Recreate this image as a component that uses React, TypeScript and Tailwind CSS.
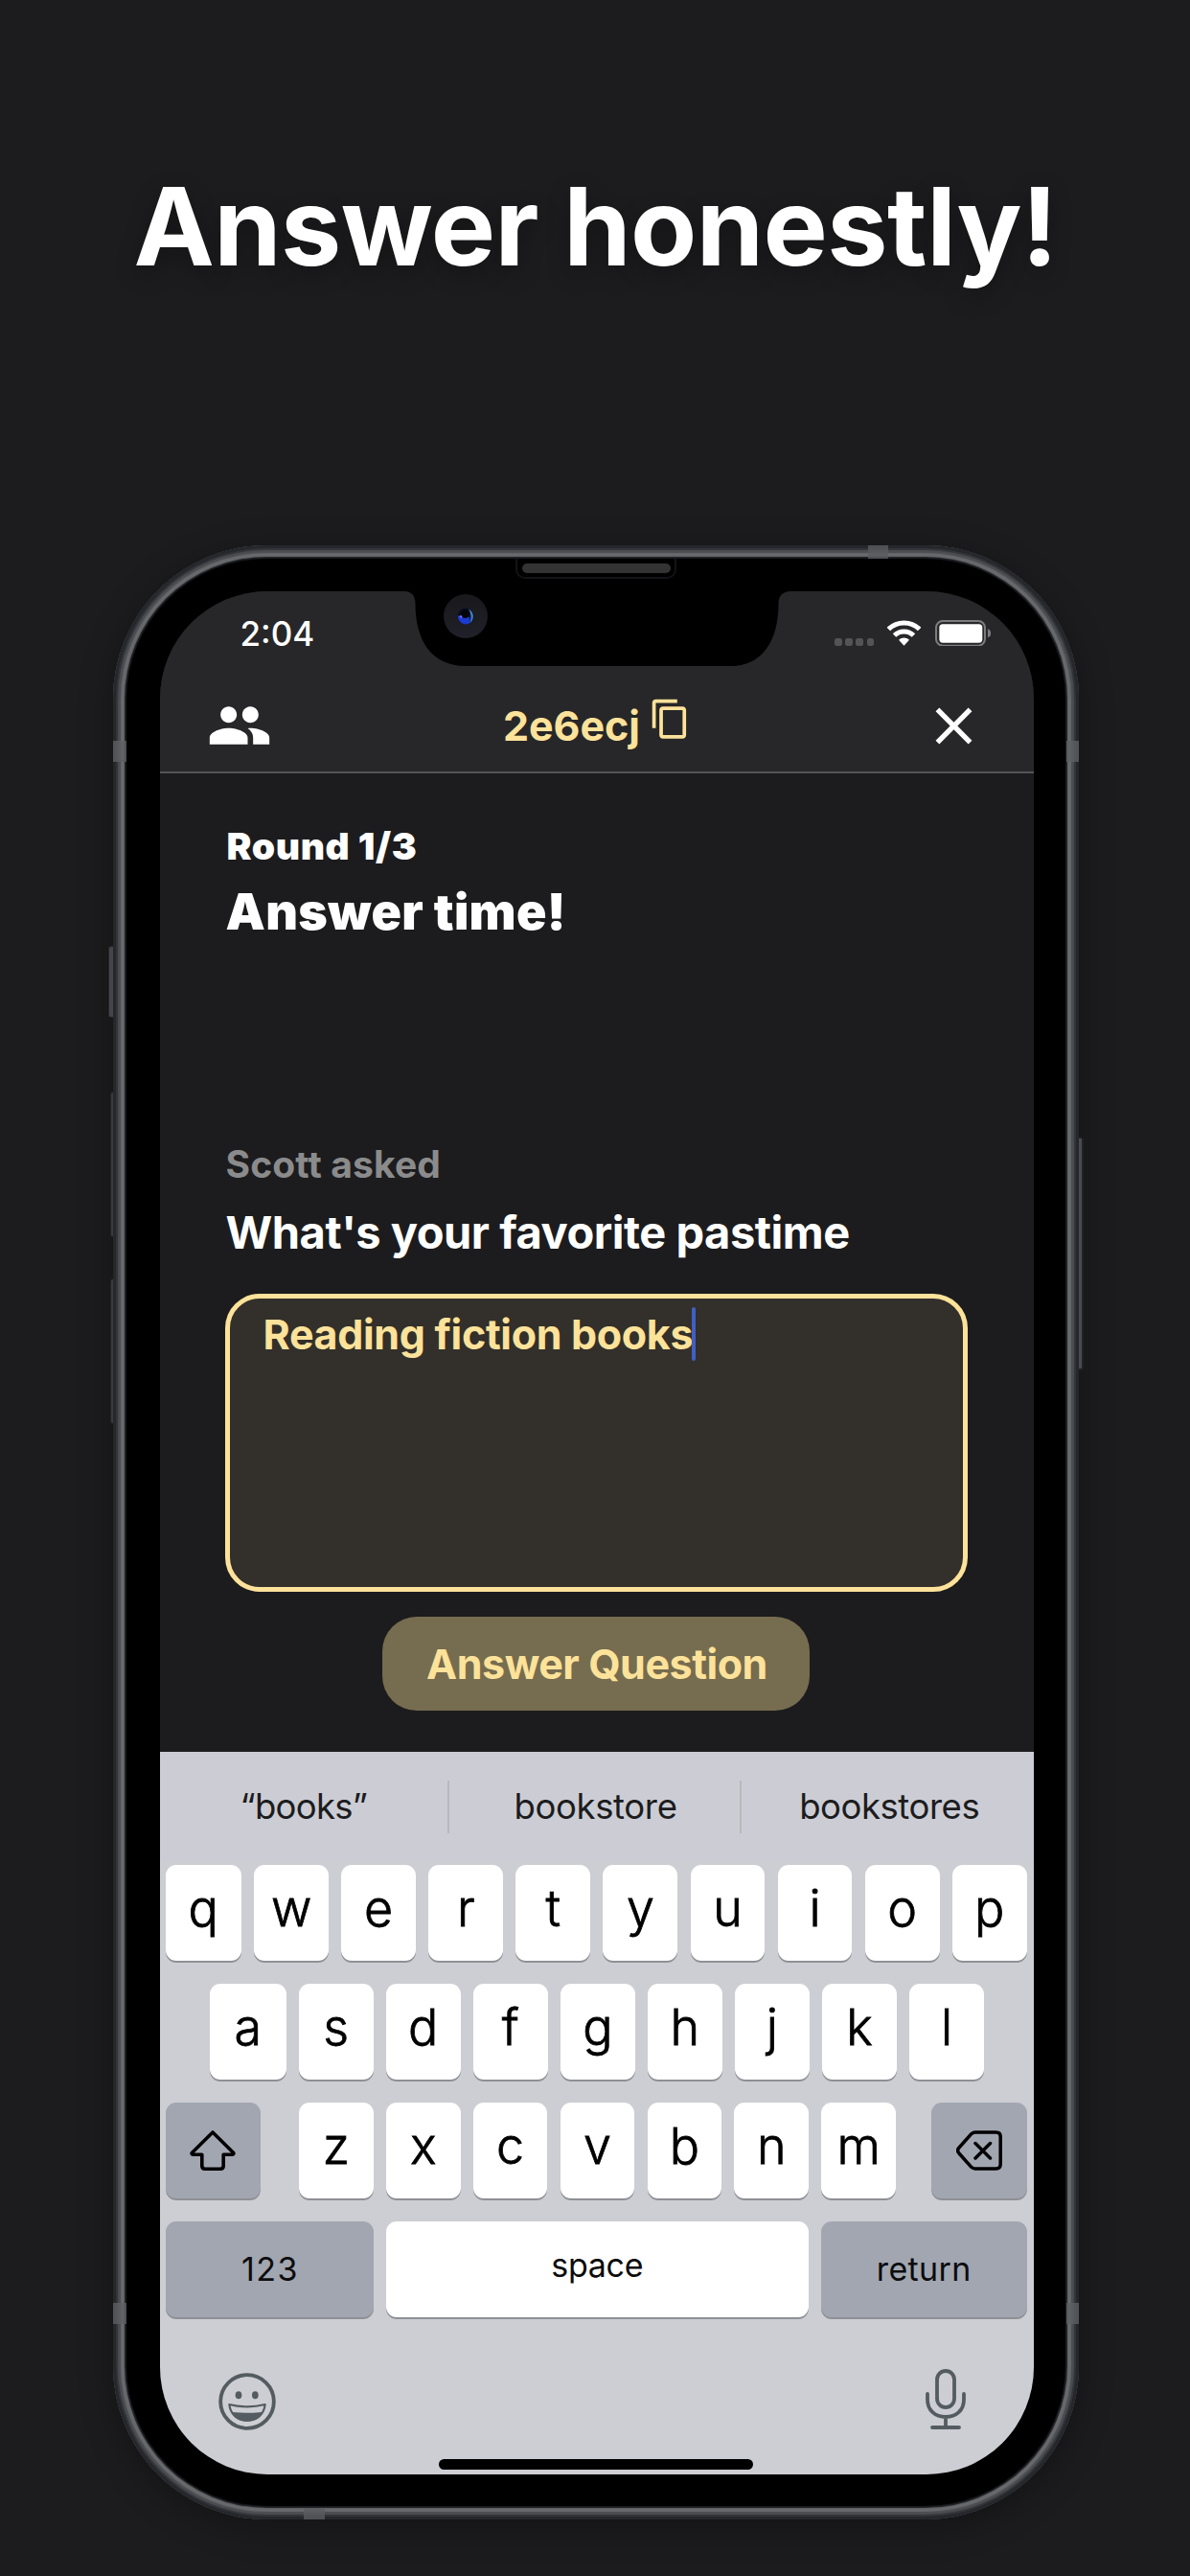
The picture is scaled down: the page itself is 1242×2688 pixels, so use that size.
import type { ReactNode } from "react";
import { MdClose, MdContentCopy, MdPeople } from "react-icons/md";

function Wifi() {
  return (
    <svg viewBox="0 0 105 80" className="h-[26.7px] w-[35px]" fill="none" stroke="#fff" strokeWidth="15">
      <path d="M4 28.5a69.5 69.5 0 0 1 97 0" />
      <path d="M22.5 48a43 43 0 0 1 60 0" />
      <path d="M52.5 80 36 62.500a23.500 23.500 0 0 1 33 0Z" fill="#fff" stroke="none" />
    </svg>
  );
}

function Battery() {
  return (
    <svg viewBox="0 0 175 83" className="h-[27.7px] w-[58.3px]">
      <rect x="3" y="3" width="153" height="77" rx="21" fill="none" stroke="#7d7d7e" strokeWidth="6" />
      <rect x="13" y="13" width="135" height="58" rx="11" fill="#fff" />
      <path d="M165 28c6 2 10 7 10 13.500s-4 11.500-10 13.500Z" fill="#7d7d7e" />
    </svg>
  );
}

function Notch() {
  return (
    <svg viewBox="0 0 403 78" className="absolute top-0 left-[255px] h-[78px] w-[403px]">
      <path
        d="M0 0c8 .3 11.500 5 11.500 13C11.500 52 29 78 64 78h277c33 0 49.500-27 49.500-65 0-8 4-12.700 12.500-13Z"
        fill="#000"
      />
    </svg>
  );
}

function ShiftIcon() {
  return (
    <svg viewBox="0 0 48 42" className="h-[42px] w-[48px]" fill="none" stroke="#000" strokeWidth="3.600" strokeLinejoin="round">
      <path d="M24 2 2.500 23.200c-.8.9-.3 2 .9 2h9.400V37c0 2 1.200 3.200 3.200 3.200h16c2 0 3.200-1.200 3.200-3.200V25.200h9.400c1.200 0 1.700-1.100.9-2Z" />
    </svg>
  );
}

function BackspaceIcon() {
  return (
    <svg viewBox="0 0 48 42" className="h-[42px] w-[48px]" fill="none" stroke="#000" strokeWidth="3.500" strokeLinecap="round" strokeLinejoin="round">
      <path d="M20 2h21.500c3 0 4.700 1.700 4.700 4.700v28.600c0 3-1.700 4.700-4.700 4.700H20c-1.600 0-3-.6-4.200-1.700L3 24c-1.800-1.900-1.800-4.100 0-6L15.800 3.700C17 2.600 18.400 2 20 2Z" />
      <path d="m20 13.500 15.500 15.500m0-15.500L20 29" />
    </svg>
  );
}

function EmojiIcon() {
  return (
    <svg viewBox="0 0 180 180" className="h-[60px] w-[60px]" fill="#545c61">
      <circle cx="90" cy="90" r="83.500" fill="none" stroke="#545c61" strokeWidth="11.500" />
      <ellipse cx="63" cy="70" rx="10" ry="12" />
      <ellipse cx="115" cy="70" rx="10" ry="12" />
      <path d="M34 99q56 14 112 0c-3 31-26 50-56 50S37 130 34 99Z" fill="none" stroke="#545c61" strokeWidth="6.500" strokeLinejoin="round" />
      <path d="M38 119q6 5 15 5 37 3 74 0 9 0 15-5c-8 22-28 33-52 33s-44-11-52-33Z" />
    </svg>
  );
}

function MicIcon() {
  return (
    <svg viewBox="0 0 42 63" className="h-[63px] w-[42px]" fill="none" stroke="#545c61" strokeWidth="3.800" strokeLinecap="round">
      <rect x="12" y="2" width="18" height="38" rx="9" />
      <path d="M2 26v6c0 11 8 18 19 18s19-7 19-18v-6M21 50v11M7 61h28" />
    </svg>
  );
}

function Letter({ children, wide }: { children: string; wide?: boolean }) {
  return (
    <div
      className={`${wide ? "w-[79.5px] shrink-0" : "flex-1"} flex h-[100px] items-center justify-center rounded-[11px] bg-white pb-[7.5px] text-[52px] leading-none font-light text-black shadow-[0_2px_0_#8e9095] [-webkit-text-stroke:0.8px_#000]`}
    >
      {children}
    </div>
  );
}

function ActionKey({ className, children }: { className: string; children: ReactNode }) {
  return (
    <div className={`${className} flex h-[100px] shrink-0 items-center justify-center rounded-[11px] text-[34px] leading-none text-[#0c0c0d] shadow-[0_2px_0_#8e9095]`}>
      {children}
    </div>
  );
}

function StatusBar() {
  return (
    <div className="flex h-10 items-center justify-between pr-[44.5px] pl-[84px]">
      <span className="text-[35px] leading-[38px] font-medium">2:04</span>
      <div className="flex items-center">
        <div className="mt-[18.5px] mr-[14px] flex gap-[3.5px]">
          {[0, 1, 2, 3].map((dot) => (
            <span key={dot} className="size-[7.7px] rounded-[2.5px] bg-[#545456]" />
          ))}
        </div>
        <Wifi />
        <div className="ml-[14.5px]">
          <Battery />
        </div>
      </div>
    </div>
  );
}

function Keyboard() {
  return (
    <div className="flex flex-1 flex-col bg-[#cdced3]">
      <div className="flex h-[114px] items-center bg-[#cccdd4] text-[36.5px] leading-none text-[#1c1c1e]">
        <span className="flex-1 text-center tracking-[-0.7px]">“books”</span>
        <span className="h-[55px] w-[2px] bg-[#b8b9be]" />
        <span className="flex-1 pl-[2px] text-center tracking-[-0.35px]">bookstore</span>
        <span className="h-[55px] w-[2px] bg-[#b8b9be]" />
        <span className="flex-1 pl-[4px] text-center tracking-[-0.45px]">bookstores</span>
      </div>
      <div className="flex flex-col gap-[24.2px] pt-[3.5px] pr-[7px] pl-[6px]">
        <div className="flex gap-[13.2px]">
          {"qwertyuiop".split("").map((c, i) => (
            <Letter key={c} wide={i === 0}>{c}</Letter>
          ))}
        </div>
        <div className="flex gap-[13.2px] pr-[44.5px] pl-[46.5px]">
          {"asdfghjkl".split("").map((c, i) => (
            <Letter key={c} wide={i === 0}>{c}</Letter>
          ))}
        </div>
        <div className="flex">
          <ActionKey className="w-[99px] bg-[#a2a6b1]">
            <ShiftIcon />
          </ActionKey>
          <div className="mr-[37.3px] ml-[40.5px] flex flex-1 gap-[13.2px]">
            {"zxcvbnm".split("").map((c) => (
              <Letter key={c}>{c}</Letter>
            ))}
          </div>
          <ActionKey className="w-[99.2px] bg-[#a2a6b1]">
            <BackspaceIcon />
          </ActionKey>
        </div>
        <div className="flex justify-between">
          <ActionKey className="w-[217px] bg-[#a2a6b1] pl-[2px] tracking-[1.5px]">123</ActionKey>
          <ActionKey className="w-[440.5px] bg-white pb-[7.5px] tracking-[-0.3px]">space</ActionKey>
          <ActionKey className="w-[214.5px] bg-[#a2a6b1] tracking-[0.35px]">return</ActionKey>
        </div>
      </div>
      <div className="mt-[54px] flex h-[63px] items-center justify-between pr-[71px] pl-[61px]">
        <div className="pt-[4px]">
          <EmojiIcon />
        </div>
        <MicIcon />
      </div>
      <div className="mt-[31px] ml-[291.5px] h-[11px] w-[328px] rounded-full bg-black" />
    </div>
  );
}

function Screen() {
  return (
    <div className="relative flex h-[1965.5px] w-[912px] flex-col overflow-hidden rounded-[112px] bg-[#1c1c1e]">
      <header className="h-[190.5px] border-b-2 border-[#545456] bg-[#272729] pt-6">
        <StatusBar />
        <div className="mt-[28.5px] flex h-24 items-center justify-between pr-[51px] pl-[49.5px]">
          <MdPeople className="size-[68px]" />
          <div className="flex items-center gap-[9px] text-[#fde29a]">
            <span className="text-[43px] leading-[56px] font-bold tracking-[-0.1px]">2e6ecj</span>
            <MdContentCopy className="mb-[12.5px] size-[44.7px]" />
          </div>
          <MdClose className="size-[65px]" />
        </div>
      </header>

      <main className="flex h-[1021px] flex-col pt-[52px] pr-[69px] pl-[68px]">
        <p className="pl-[2px] text-[39px] leading-[48px] font-black tracking-[0.6px]">Round 1/3</p>
        <h2 className="mt-[14px] pl-px text-[52px] leading-[62px] font-black tracking-[0.3px]">Answer time!</h2>
        <p className="mt-[208px] pl-px text-[39px] leading-[48px] font-bold tracking-[0.15px] text-[#8b8b8c]">Scott asked</p>
        <p className="mt-[19px] pl-px text-[47px] leading-[56px] font-bold tracking-[-0.47px]">What's your favorite pastime</p>
        <div className="mt-[36px] flex h-[311px] items-start rounded-[36px] border-5 border-[#fde29a] bg-[#332f2a] pt-[9px] pl-[35px]">
          <span className="text-[43px] leading-[56px] font-bold tracking-[-0.33px] text-[#fde29a]">Reading fiction books</span>
          <span className="-ml-px h-[56px] w-[4px] rounded-full bg-[#3f5fc4]" />
        </div>
        <button className="mt-[26px] h-[97.5px] w-[446.7px] self-center rounded-[36px] bg-[#766c4f] pl-[2px] text-[43px] leading-[56px] font-bold tracking-[-0.45px] text-[#fde29a]">
          Answer Question
        </button>
      </main>

      <Keyboard />
      <Notch />

      {/* front camera */}
      <div className="absolute top-[3px] left-[296px] flex size-[46.500px] items-center justify-center rounded-full bg-linear-to-b from-[#19191b] to-[#20202a]">
        <svg viewBox="0 0 18 18" className="size-[18px]">
          <circle cx="9" cy="9" r="8.500" fill="#0a0d22" />
          <path d="M.8 8.500a8.300 8.300 0 0 0 13 7.300L13 10 6.500 9Z" fill="#1c3bd0" />
          <path d="M12 1.500a8.500 8.500 0 0 1 1.500 14.500c1.500-5 1.500-9-1.500-14.500Z" fill="#3f7fc8" />
          <circle cx="8.500" cy="6.500" r="4.500" fill="#04050c" />
          <circle cx="4" cy="9.500" r="1.300" fill="#7a6cf0" />
        </svg>
      </div>
    </div>
  );
}

function Phone() {
  return (
    <div className="relative ml-[118px] h-[2060px] w-[1008px]">
      {/* side buttons */}
      <div className="absolute top-[418px] -left-[5px] h-[75px] w-[8px] rounded-l-[3px] border border-[#2b2c30] bg-[#505155]" />
      <div className="absolute top-[570px] -left-[3px] h-[152px] w-[6px] rounded-l-[3px] border border-[#26272b] bg-[#43454a]" />
      <div className="absolute top-[765px] -left-[3px] h-[152px] w-[6px] rounded-l-[3px] border border-[#26272b] bg-[#43454a]" />
      <div className="absolute top-[617px] -right-[5px] h-[244px] w-[8px] rounded-r-[3px] border-2 border-[#26272b] bg-[#55575d]" />

      <div className="relative h-full w-full rounded-[160px] bg-black pt-[47.5px] pl-[48.5px] shadow-[0_8px_36px_rgba(0,0,0,0.3),inset_0_0_0_3px_#25272b,inset_0_0_1px_5px_#323439,inset_0_0_1px_8px_#4b4d51,inset_0_0_1px_12px_#68696c,inset_0_0_1px_14px_#1c1d22]">
        <Screen />
        {/* earpiece */}
        <div className="absolute top-[13px] left-[420px] flex h-[22px] w-[168px] justify-center rounded-b-[10px] border-2 border-t-0 border-[#121316] pt-[6px]">
          <span className="h-[10px] w-[155px] rounded-full bg-[#333]" />
        </div>
        {/* antenna bands */}
        <span className="absolute top-[204px] left-0 h-[22px] w-[14px] bg-[#5e5f63]/80" />
        <span className="absolute top-[204px] right-0 h-[22px] w-[13px] bg-[#5e5f63]/80" />
        <span className="absolute top-[1834px] left-0 h-[22px] w-[14px] bg-[#5e5f63]/80" />
        <span className="absolute top-[1834px] right-0 h-[22px] w-[13px] bg-[#5e5f63]/80" />
        <span className="absolute top-0 left-[788px] h-[13.500px] w-[21px] bg-[#5a5b5e]/80" />
        <span className="absolute bottom-0 left-[199px] h-[12.500px] w-[22px] bg-[#5a5b5e]/80" />
      </div>
    </div>
  );
}

export default function App() {
  return (
    <div className="h-[2688px] w-[1242px] overflow-hidden bg-[#1c1c1e] pt-[176px] font-['Inter',sans-serif] text-white">
      <h1 className="mb-[273px] pl-px text-center text-[113px] leading-[120px] font-bold tracking-[-0.54px] [text-shadow:0_8px_24px_rgba(0,0,0,0.3)]">
        Answer honestly!
      </h1>
      <Phone />
    </div>
  );
}
